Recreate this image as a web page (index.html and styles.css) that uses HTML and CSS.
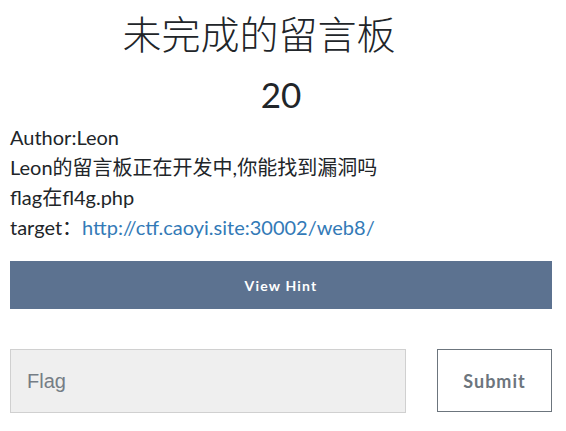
FILE: index.html
```html
<!DOCTYPE html>
<html>
<head>
<meta charset="utf-8">
<link rel="stylesheet" href="styles.css">
</head>
<body>
<div class="modal">
  <h2 class="title">未完成的留言板</h2>
  <h3 class="value">20</h3>
  <div class="desc">
    <p>Author:Leon</p>
    <p>Leon的留言板正在开发中,你能找到漏洞吗</p>
    <p>flag在fl4g.php</p>
    <p>target：<a href="#">http://ctf.caoyi.site:30002/web8/</a></p>
  </div>
  <button class="hint">View Hint</button>
  <div class="submit-row">
    <input class="flag" type="text" placeholder="Flag">
    <button class="submit">Submit</button>
  </div>
</div>
</body>
</html>
```
FILE: styles.css
```css
html, body {
  margin: 0;
  padding: 0;
  background: #fff;
}
body {
  font-family: Lato, "Noto Sans CJK SC", sans-serif;
  color: #212529;
}
.modal {
  padding: 0 14px 0 10px;
}
.title {
  margin: 10px 0 0;
  padding-right: 44px;
  text-align: center;
  font-weight: 300;
  font-size: 39px;
  line-height: 48px;
}
.value {
  margin: 16px 0 0;
  text-align: center;
  font-weight: 400;
  font-size: 35px;
  line-height: 40px;
}
.desc {
  margin-top: 8px;
  font-size: 20px;
  line-height: 30px;
}
.desc p {
  margin: 0;
}
.desc a {
  color: #337ab7;
  text-decoration: none;
}
.hint {
  display: block;
  width: 100%;
  margin-top: 19px;
  height: 48px;
  border: none;
  background: #5c7290;
  color: #fff;
  font-family: Lato, sans-serif;
  font-weight: 700;
  font-size: 14px;
  letter-spacing: 1.2px;
}
.submit-row {
  display: flex;
  gap: 31px;
  margin-top: 40px;
}
.flag {
  flex: 1;
  height: 64px;
  box-sizing: border-box;
  background: #efefef;
  border: 1px solid #d0d0d0;
  padding: 0 16px;
  font-family: "Liberation Sans", Arial, sans-serif;
  font-size: 20px;
  color: #495057;
  outline: none;
}
.flag::placeholder {
  color: #757d85;
}
.submit {
  width: 115px;
  height: 63px;
  box-sizing: border-box;
  background: #fff;
  border: 1px solid #6c757d;
  color: #6c757d;
  font-family: Lato, sans-serif;
  font-weight: 700;
  font-size: 18px;
  letter-spacing: 1px;
}
```
